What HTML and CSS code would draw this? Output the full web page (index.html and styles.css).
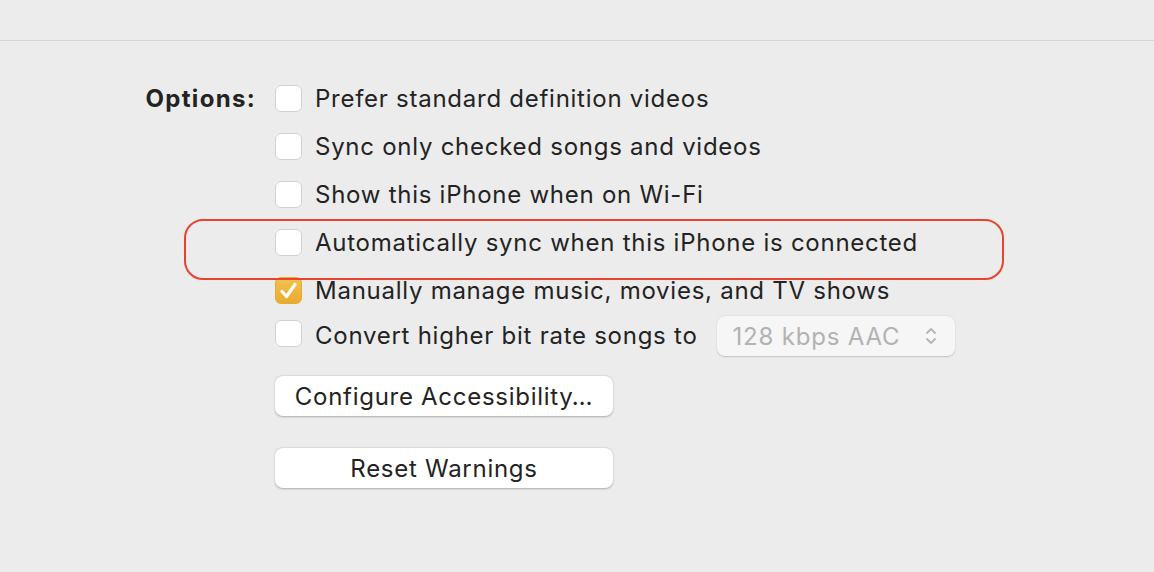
FILE: index.html
```html
<!DOCTYPE html>
<html>
<head>
<meta charset="utf-8">
<link rel="stylesheet" href="styles.css">
</head>
<body>
<div class="page">
  <div class="top"></div>
  <div class="options">
    <div class="label">Options:</div>
    <div class="list">
      <div class="row"><span class="box"></span><span class="text">Prefer standard definition videos</span></div>
      <div class="row"><span class="box"></span><span class="text">Sync only checked songs and videos</span></div>
      <div class="row"><span class="box"></span><span class="text">Show this iPhone when on Wi-Fi</span></div>
      <div class="row"><span class="box"></span><span class="text">Automatically sync when this iPhone is connected</span></div>
      <div class="row"><span class="box checked"><svg viewBox="0 0 27 27" width="27" height="27"><path d="M7 14.5 L11.5 19.5 L20 7.5" fill="none" stroke="#fff" stroke-width="3.2" stroke-linecap="round" stroke-linejoin="round"/></svg></span><span class="text">Manually manage music, movies, and TV shows</span></div>
      <div class="row row-last"><span class="box"></span><span class="text">Convert higher bit rate songs to</span>
        <div class="popup"><span class="popup-text">128 kbps AAC</span>
          <svg class="chev" viewBox="0 0 12 22" width="12" height="22"><path d="M2 8 L6 4 L10 8 M2 14 L6 18 L10 14" fill="none" stroke="#b7b7b7" stroke-width="2" stroke-linecap="round" stroke-linejoin="round"/></svg>
        </div>
      </div>
      <button class="btn btn-first">Configure Accessibility…</button>
      <button class="btn btn-second">Reset Warnings</button>
    </div>
  </div>
  <div class="highlight"></div>
</div>
</body>
</html>
```
FILE: styles.css
```css
html, body {
  margin: 0;
  padding: 0;
  background: #ececec;
}
.page {
  position: relative;
  width: 1154px;
  height: 572px;
  overflow: hidden;
  font-family: "Inter", "Liberation Sans", sans-serif;
  color: #232323;
}
.top {
  height: 40px;
  border-bottom: 1px solid #d5d5d5;
}
.options {
  display: grid;
  grid-template-columns: 255px 1fr;
  column-gap: 20px;
  padding-top: 33px;
}
.label {
  justify-self: end;
  font-weight: 700;
  font-size: 24px;
  letter-spacing: 1.3px;
  height: 48px;
  line-height: 50px;
  margin-right: -1px;
}
.list {
  display: flex;
  flex-direction: column;
  align-items: flex-start;
}
.row {
  display: flex;
  align-items: center;
  height: 48px;
}
.row-last {
  height: 40px;
  margin-top: 2px;
}
.box {
  box-sizing: border-box;
  width: 27px;
  height: 27px;
  border-radius: 6px;
  background: #fff;
  border: 1px solid #d2d2d2;
  display: flex;
}
.row-last .box {
  margin-top: -5px;
}
.box.checked {
  background: linear-gradient(#f4c24f, #e8ac2c);
  border-color: #e3a93a;
}
.box.checked svg {
  margin: -1px;
}
.text {
  font-size: 24px;
  letter-spacing: 0.74px;
  margin-left: 13px;
  white-space: nowrap;
}
.row-last .text {
  margin-top: -2px;
}
.popup {
  box-sizing: border-box;
  margin-left: 19px;
  width: 238px;
  height: 40px;
  border-radius: 8px;
  background: #f6f6f6;
  box-shadow: 0 0.5px 1.5px rgba(0,0,0,0.18);
  display: flex;
  align-items: center;
  justify-content: space-between;
  padding: 0 18px 0 16px;
}
.popup-text {
  font-size: 24px;
  letter-spacing: 0.8px;
  color: #b2b2b2;
}
.btn {
  box-sizing: border-box;
  width: 338px;
  height: 40px;
  border: none;
  border-radius: 8px;
  background: #fff;
  box-shadow: 0 0.5px 2px rgba(0,0,0,0.28);
  font-family: "Inter", "Liberation Sans", sans-serif;
  font-size: 24px;
  letter-spacing: 0.72px;
  color: #232323;
  padding: 0;
}
.btn-first {
  margin-top: 20px;
}
.btn-second {
  margin-top: 32px;
}
.highlight {
  position: absolute;
  left: 184px;
  top: 219px;
  width: 820px;
  height: 61px;
  box-sizing: border-box;
  border: 2px solid #e8432c;
  border-radius: 19px;
}
```
